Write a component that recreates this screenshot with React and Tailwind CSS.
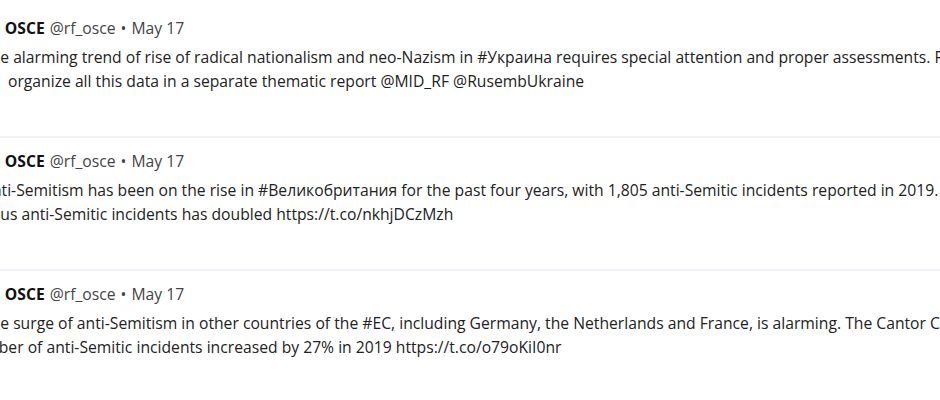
import React from "react";

const tweets = [
  {
    lines: [
      ["", "The alarming trend of rise of radical nationalism and neo-Nazism in #Украина requires special attention and proper assessments. Russia will"],
      ["ml-[26px]", "organize all this data in a separate thematic report @MID_RF @RusembUkraine"],
    ],
  },
  {
    lines: [
      ["", "Anti-Semitism has been on the rise in #Великобритания for the past four years, with 1,805 anti-Semitic incidents reported in 2019. The number"],
      ["", "Thus anti-Semitic incidents has doubled https://t.co/nkhjDCzMzh"],
    ],
  },
  {
    lines: [
      ["", "The surge of anti-Semitism in other countries of the #EC, including Germany, the Netherlands and France, is alarming. The Cantor Center"],
      ["ml-[-17px]", "number of anti-Semitic incidents increased by 27% in 2019 https://t.co/o79oKiI0nr"],
    ],
  },
];

export default function App() {
  return (
    <div
      className="w-[940px] h-[400px] overflow-hidden bg-white text-[#222222] pt-[5px]"
      style={{ fontFamily: '"Open Sans", "Noto Sans", sans-serif' }}
    >
      {tweets.map((t, i) => (
        <div key={i} className="h-[133px] border-b-2 border-[#eef1f5] pt-3 ml-[-18px]">
          <div className="flex items-baseline gap-[5px] text-[15.7px] leading-[22px] whitespace-nowrap">
            <span className="font-bold text-[#111111] ml-[-51px]">Russia in OSCE</span>
            <span className="text-[#444444]">@rf_osce</span>
            <span className="text-[#444444]">•</span>
            <span className="text-[#444444]">May 17</span>
          </div>
          <div className="mt-[6px] text-[15.7px] leading-[24px]">
            {t.lines.map(([cls, l], j) => (
              <div key={j} className={"whitespace-nowrap " + cls}>{l}</div>
            ))}
          </div>
        </div>
      ))}
    </div>
  );
}
